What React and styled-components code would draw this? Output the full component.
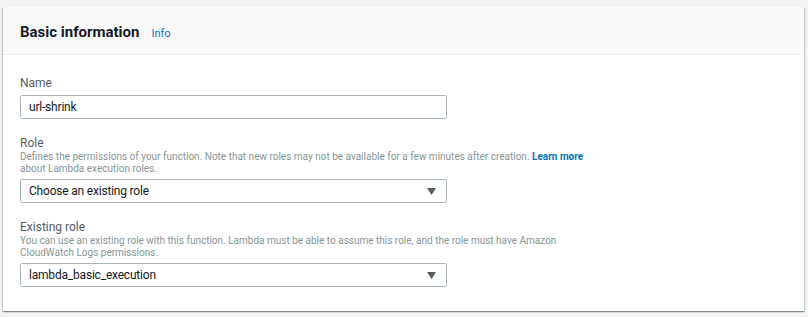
import styled, { createGlobalStyle } from 'styled-components';

const GlobalStyle = createGlobalStyle`
  html, body {
    margin: 0;
    padding: 0;
    background: #f2f3f3;
  }
  body {
    font-family: Roboto, "Liberation Sans", Arial, sans-serif;
    color: #16191f;
  }
`;

const Page = styled.div`
  padding: 7px 4px 6px 3px;
`;

const Card = styled.section`
  background: #fff;
  box-shadow: 0 1px 1px 0 rgba(0, 28, 36, 0.3), 1px 1px 1px 0 rgba(0, 28, 36, 0.15),
    -1px 1px 1px 0 rgba(0, 28, 36, 0.15);
`;

const Header = styled.header`
  display: flex;
  align-items: center;
  gap: 12px;
  height: 47px;
  padding: 0 17px;
  background: #fafafa;
  border-bottom: 1px solid #eaeded;
`;

const Title = styled.h2`
  margin: 0;
  font-size: 15px;
  font-weight: 700;
  color: #16191f;
  padding-top: 2px;
`;

const InfoLink = styled.a`
  font-size: 11px;
  color: #0073bb;
  text-decoration: none;
  padding-top: 5px;
`;

const Body = styled.div`
  display: flex;
  flex-direction: column;
  gap: 16px;
  padding: 20px 17px 24px;
`;

const Field = styled.div`
  display: flex;
  flex-direction: column;
`;

const Label = styled.label`
  font-size: 12px;
  line-height: 16px;
  color: #545b64;
`;

const Description = styled.p`
  margin: 0;
  max-width: 572px;
  font-size: 10px;
  line-height: 12px;
  color: #879596;
`;

const LearnMore = styled.a`
  color: #0073bb;
  font-weight: 700;
  text-decoration: none;
`;

const Control = styled.div`
  display: flex;
  align-items: center;
  width: 427px;
  height: 24px;
  margin-top: 4px;
  padding: 0 8px;
  box-sizing: border-box;
  border: 1px solid #aab7b8;
  border-radius: 2px;
  background: #fff;
  font-size: 12px;
  letter-spacing: -0.2px;
  color: #16191f;
`;

const Value = styled.span`
  flex: 1;
`;

const Caret = styled.svg`
  width: 9px;
  height: 7px;
  margin-right: 2px;
`;

function Select({ value }) {
  return (
    <Control>
      <Value>{value}</Value>
      <Caret viewBox="0 0 9 7">
        <path d="M0 0h9L4.5 7z" fill="#545b64" />
      </Caret>
    </Control>
  );
}

export default function App() {
  return (
    <>
      <GlobalStyle />
      <Page>
        <Card>
          <Header>
            <Title>Basic information</Title>
            <InfoLink href="#">Info</InfoLink>
          </Header>
          <Body>
            <Field>
              <Label>Name</Label>
              <Control>
                <Value>url-shrink</Value>
              </Control>
            </Field>
            <Field>
              <Label>Role</Label>
              <Description>
                Defines the permissions of your function. Note that new roles may not be available
                for a few minutes after creation. <LearnMore href="#">Learn more</LearnMore> about
                Lambda execution roles.
              </Description>
              <Select value="Choose an existing role" />
            </Field>
            <Field>
              <Label>Existing role</Label>
              <Description>
                You can use an existing role with this function. Lambda must be able to assume this
                role, and the role must have Amazon CloudWatch Logs permissions.
              </Description>
              <Select value="lambda_basic_execution" />
            </Field>
          </Body>
        </Card>
      </Page>
    </>
  );
}
